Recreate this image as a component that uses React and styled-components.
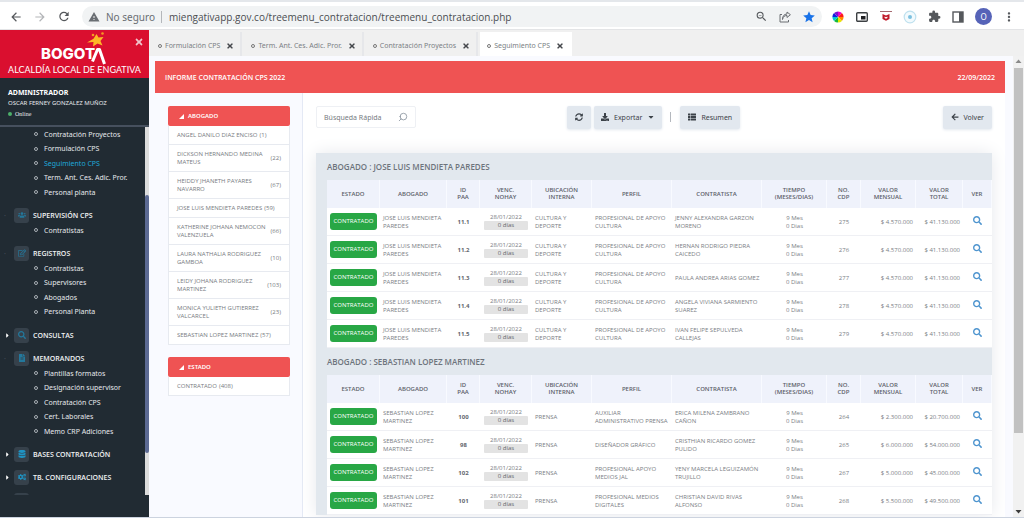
import React from "react";
import styled, { createGlobalStyle, css } from "styled-components";
import { Search } from "lucide-react";
import {
  FaUsers,
  FaRegEdit,
  FaSearch,
  FaFileAlt,
  FaDatabase,
  FaCogs,
  FaThList,
  FaDownload,
  FaCaretDown,
  FaCaretRight,
  FaArrowLeft,
  FaSyncAlt,
  FaTimes,
} from "react-icons/fa";
import {
  MdArrowBack,
  MdArrowForward,
  MdRefresh,
  MdWarning,
  MdStar,
  MdExtension,
  MdMoreVert,
  MdZoomOut,
} from "react-icons/md";

const GlobalStyle = createGlobalStyle`
  *, *::before { box-sizing: border-box; }
  body {
    margin: 0;
    background: #fff;
    font-family: "Noto Sans", "Open Sans", sans-serif;
    color: #6b6f76;
  }
  button, input { font-family: inherit; }
  ul { list-style: none; margin: 0; padding: 0; }
  a { color: inherit; text-decoration: none; }
`;

const Page = styled.div`
  display: flex;
  flex-direction: column;
  height: 100vh;
  overflow: hidden;
  border-bottom: 1px solid #ccd3df;
`;

/* Browser bar */

const BrowserBar = styled.header`
  display: flex;
  align-items: center;
  flex: none;
  height: 30px;
  padding: 2px 8px 0 9px;
  border-top: 2px solid #e4e7eb;
  border-bottom: 1px solid #e3e4e6;
  color: #55585c;
`;

const NavIcons = styled.div`
  display: flex;
  align-items: center;
  gap: 10px;
  width: 73px;
`;

const BarButton = styled.button`
  display: flex;
  align-items: center;
  justify-content: center;
  width: 14px;
  height: 14px;
  padding: 0;
  border: 0;
  background: none;
  color: ${(p) => p.$color || "#55585c"};
`;

const AddressBar = styled.div`
  display: flex;
  align-items: center;
  flex: 1;
  height: 21px;
  padding: 0 6px 0 6px;
  border-radius: 11px;
  background: #f1f3f4;
`;

const Security = styled.span`
  display: flex;
  align-items: center;
  gap: 6px;
  padding-right: 6px;
  margin-right: 7px;
  border-right: 1px solid #b4b7bb;
  font-size: 10px;
  line-height: 12px;
  color: #6a6e73;
`;

const UrlInput = styled.input`
  flex: 1;
  min-width: 0;
  padding: 0;
  border: 0;
  outline: 0;
  background: none;
  font-family: "Open Sans", sans-serif;
  font-size: 10px;
  color: #4b4e52;
`;

const AddressIcons = styled.div`
  display: flex;
  align-items: center;
  gap: 10px;
`;

const Extensions = styled.div`
  display: flex;
  align-items: center;
  gap: 10px;
  padding-left: 9px;
`;

const Avatar = styled.button`
  width: 17px;
  height: 17px;
  padding: 0;
  border: 0;
  border-radius: 50%;
  background: #5663b8;
  color: #fff;
  font-size: 8px;
  line-height: 17px;
`;

/* Sidebar */

const Body = styled.div`
  display: flex;
  flex: 1;
  min-height: 0;
`;

const Sidebar = styled.aside`
  display: flex;
  flex-direction: column;
  flex: none;
  width: 149px;
  background: #212b33;
  color: #e6e9ec;
`;

const Brand = styled.div`
  position: relative;
  flex: none;
  height: 48px;
  padding-top: 15px;
  background: #da0f2f;
  color: #fff;
  text-align: center;
`;

const LogoName = styled.div`
  padding-right: 13px;
  font-family: Inter, sans-serif;
  font-weight: 800;
  font-size: 15px;
  line-height: 18px;
`;

const LogoMark = styled.svg`
  position: absolute;
  left: 84px;
  top: 0;
`;

const BrandSub = styled.div`
  font-family: Lato, sans-serif;
  font-size: 9px;
  line-height: 14px;
`;

const CloseMenu = styled.button`
  position: absolute;
  right: 5px;
  top: 7px;
  display: flex;
  padding: 0;
  border: 0;
  background: none;
  color: #f0c4cb;
`;

const UserBox = styled.div`
  flex: none;
  height: 49px;
  padding: 9px 8px 0;
  border-bottom: 2px solid #46505e;
  font-size: 6px;
  line-height: 11px;
`;

const Role = styled.div`
  font-size: 7px;
  font-weight: 700;
  color: #fff;
`;

const Online = styled.div`
  display: flex;
  align-items: center;
  gap: 3px;
  font-family: "Liberation Serif", serif;
  line-height: 10px;

  &::before {
    content: "";
    width: 4px;
    height: 4px;
    border-radius: 50%;
    background: #4caf6a;
  }
`;

const MenuArea = styled.div`
  display: flex;
  flex: none;
  height: 368px;
`;

const Menu = styled.nav`
  flex: 1;
  overflow: hidden;
`;

const MenuTrack = styled.div`
  width: 4px;
  padding-top: 68px;
  background: #dcdcdc;
`;

const MenuThumb = styled.div`
  height: 258px;
  border-radius: 2px;
  background: #5c6a93;
`;

const MenuHead = styled.a`
  display: flex;
  align-items: center;
  height: 16px;
  margin-top: 7px;
  padding-left: 4px;
  font-family: "Open Sans", sans-serif;
  font-size: 7px;
  font-weight: 600;
  color: #f1f3f4;
`;

const Marker = styled.span`
  display: flex;
  width: 10px;
  color: ${(p) => (p.$open ? "#46505a" : "#ffffff")};
`;

const MenuIcon = styled.span`
  display: flex;
  align-items: center;
  justify-content: center;
  width: 15px;
  height: 15px;
  margin-right: 4px;
  border-radius: 3px;
  background: #36414b;
  color: ${(p) => (p.$bright ? "#1f94c4" : "#23789c")};
`;

const SubMenu = styled.ul`
  padding-bottom: 1px;
`;

const SubItem = styled.li`
  display: flex;
  align-items: center;
  gap: 6px;
  height: 14px;
  padding-left: 34px;
  font-size: 7px;
  white-space: nowrap;

  &:nth-child(even) {
    height: 15px;
  }
  &::before {
    content: "";
    width: 4px;
    height: 4px;
    border: 1px solid #aab0b6;
    border-radius: 50%;
  }
  a {
    color: ${(p) => (p.$active ? "#1fa7d8" : "#e6e9ec")};
  }
`;

/* Main area */

const Main = styled.div`
  display: flex;
  flex-direction: column;
  flex: 1;
  min-width: 0;
`;

const Tabs = styled.div`
  display: flex;
  flex: none;
  gap: 2px;
  height: 26px;
  padding: 2px 0 0 2px;
  background: #f0f0f0;
`;

const Tab = styled.div`
  display: flex;
  align-items: center;
  gap: 3px;
  padding: 3px 6px 0 7px;
  border-right: 2px solid #e6e7ea;
  font-size: 7px;
  color: #7b7f85;
  ${(p) =>
    p.$active &&
    css`
      background: #fff;
      border-right-color: #fff;
    `}

  &::before {
    content: "";
    width: 4px;
    height: 4px;
    border: 1px solid #777;
    border-radius: 50%;
  }
`;

const TabClose = styled.button`
  display: flex;
  margin-left: 3px;
  padding: 0;
  border: 0;
  background: none;
  color: #44474b;
`;

const Frame = styled.div`
  display: flex;
  flex: 1;
  min-height: 0;
`;

const Content = styled.main`
  display: flex;
  flex-direction: column;
  flex: 1;
  min-width: 0;
  padding: 5px 8px 0 6px;
  background: #f9faff;
  overflow: hidden;
`;

const TitleBar = styled.div`
  display: flex;
  align-items: center;
  justify-content: space-between;
  flex: none;
  height: 32px;
  padding: 0 10px;
  background: #ef5353;
  color: #fff;
  font-family: "Open Sans", sans-serif;
  font-size: 7px;
  font-weight: 600;
`;

const Columns = styled.div`
  display: flex;
  flex: 1;
  min-height: 0;
`;

const Filters = styled.aside`
  flex: none;
  width: 148px;
  padding: 13px 12px 0 13px;
  border-right: 1px solid #e4e9f5;
`;

const FilterPanel = styled.section`
  margin-bottom: 12px;
`;

const FilterHead = styled.h2`
  display: flex;
  align-items: center;
  gap: 4px;
  height: 20px;
  margin: 0;
  padding-left: 11px;
  border-radius: 2px;
  background: #ef5353;
  color: #fff;
  font-size: 6px;
  font-weight: 600;

  &::before {
    content: "";
    border-left: 5px solid transparent;
    border-bottom: 5px solid #fff;
  }
`;

const FilterList = styled.ul`
  border: 1px solid #e7eaf0;
  border-top: 0;
  background: #fff;
  font-family: "Open Sans", sans-serif;
`;

const FilterItem = styled.li`
  a {
    display: flex;
    align-items: center;
    gap: 2px;
    padding: 5px 8px;
    font-size: 6px;
    line-height: 8px;
    color: #777b81;
  }
  & + & {
    border-top: 1px solid #e7eaf0;
  }
`;

const FilterName = styled.span`
  ${(p) =>
    p.$wrap &&
    css`
      flex: 1;
      white-space: pre;
    `}
`;

const Report = styled.section`
  flex: 1;
  min-width: 0;
  padding: 12px 13px 0 13px;
  background: #fff;
`;

const Toolbar = styled.div`
  display: flex;
  align-items: center;
  height: 24px;
  margin-bottom: 24px;
`;

const SearchBox = styled.label`
  display: flex;
  align-items: center;
  width: 100px;
  height: 22px;
  padding: 0 7px;
  border: 1px solid #eef0f4;
  border-radius: 2px;
  color: #8a949f;
  margin-right: 151px;

  input {
    flex: 1;
    width: 60px;
    padding: 0;
    border: 0;
    outline: 0;
    font-size: 7px;
  }
  input::placeholder {
    color: #777b81;
    opacity: 1;
  }
  svg {
    transform: scaleX(-1);
  }
`;

const ToolButton = styled.button`
  display: flex;
  align-items: center;
  gap: 5px;
  height: 23px;
  padding: 0 ${(p) => p.$pad || 7}px;
  border: 0;
  border-radius: 2px;
  background: #e2e8ef;
  box-shadow: 0 1px 3px #e2e8ef;
  color: #3c4249;
  font-size: 7px;
  white-space: nowrap;
  margin-right: ${(p) => p.$after || 0}px;
`;

const Divider = styled.span`
  width: 1px;
  height: 10px;
  margin-right: 9px;
  background: #b4b8be;
`;

const Spacer = styled.span`
  flex: 1;
`;

const Groups = styled.div`
  background: #e2e8ee;
  padding-left: 11px;
  box-shadow: 0 0 16px #e6e8ec;
`;

const GroupTitle = styled.h3`
  display: flex;
  align-items: center;
  height: 27px;
  margin: 0;
  font-family: "Open Sans", sans-serif;
  font-size: 8px;
  font-weight: 600;
  line-height: 10px;
  color: #6d747c;
`;

const Table = styled.table`
  width: 100%;
  table-layout: fixed;
  border-collapse: separate;
  border-spacing: 0;
  background: #fff;
  font-family: "Open Sans", sans-serif;
  font-size: 6px;
  line-height: 8px;
`;

const Th = styled.th`
  height: 28px;
  padding: 0 2px;
  border-right: 1px solid #f8faff;
  background: #eff2fb;
  font-weight: 600;
  line-height: 7px;
  color: #5c6169;
  white-space: pre-line;
`;

const Td = styled.td`
  height: 28px;
  padding: 0 3px;
  border-bottom: 1px solid #eff0f4;
  text-align: ${(p) => p.$align || "left"};
  font-weight: ${(p) => (p.$strong ? 700 : 400)};
  color: ${(p) => (p.$strong ? "#63676d" : "#7a7e84")};
  white-space: pre;
`;

const Status = styled.span`
  display: block;
  height: 17px;
  border-radius: 3px;
  background: #28a745;
  color: #fff;
  line-height: 17px;
  text-align: center;
`;

const Days = styled.span`
  display: block;
  height: 9px;
  margin: 0 1px;
  border-radius: 1px;
  background: #e3e3e3;
  line-height: 9px;
  color: #5f6369;
`;

const ViewButton = styled.button`
  padding: 0;
  border: 0;
  background: none;
  color: #4f95cf;
  line-height: 0;
`;

const PageTrack = styled.div`
  display: flex;
  flex-direction: column;
  align-items: center;
  width: 11px;
  padding: 1px 0;
  background: #f1f1f1;
`;

const PageThumb = styled.div`
  flex: none;
  width: 9px;
  height: 365px;
  margin: 3px 0 auto;
  background: #c1c1c1;
`;

const MENU = [
  { items: ["Contratación Proyectos", "Formulación CPS", "Seguimiento CPS", "Term. Ant. Ces. Adic. Pror.", "Personal planta"] },
  { title: "SUPERVISIÓN CPS", icon: FaUsers, items: ["Contratistas"] },
  { title: "REGISTROS", icon: FaRegEdit, items: ["Contratistas", "Supervisores", "Abogados", "Personal Planta"] },
  { title: "CONSULTAS", icon: FaSearch },
  {
    title: "MEMORANDOS",
    icon: FaFileAlt,
    items: ["Plantillas formatos", "Designación supervisor", "Contratación CPS", "Cert. Laborales", "Memo CRP Adiciones"],
  },
  { title: "BASES CONTRATACIÓN", icon: FaDatabase, bright: true },
  { title: "TB. CONFIGURACIONES", icon: FaCogs, bright: true },
  { title: "", icon: null },
];

const TABS = ["Formulación CPS", "Term. Ant. Ces. Adic. Pror.", "Contratación Proyectos", "Seguimiento CPS"];

const LAWYERS = [
  ["ANGEL DANILO DIAZ ENCISO", 1],
  ["DICKSON HERNANDO MEDINA\nMATEUS", 22],
  ["HEIDDY JHANETH PAYARES\nNAVARRO", 67],
  ["JOSE LUIS MENDIETA PAREDES", 59],
  ["KATHERINE JOHANA NEMOCON\nVALENZUELA", 66],
  ["LAURA NATHALIA RODRIGUEZ\nGAMBOA", 10],
  ["LEIDY JOHANA RODRIGUEZ\nMARTINEZ", 103],
  ["MONICA YULIETH GUTIERREZ\nVALCARCEL", 23],
  ["SEBASTIAN LOPEZ MARTINEZ", 57],
];

const COLUMNS = [
  ["ESTADO", 53],
  ["ABOGADO", 67],
  ["ID\nPAA", 33],
  ["VENC.\nNOHAY", 52],
  ["UBICACIÓN\nINTERNA", 60],
  ["PERFIL", 80],
  ["CONTRATISTA", 90],
  ["TIEMPO\n(MESES/DIAS)", 65],
  ["NO.\nCDP", 34],
  ["VALOR\nMENSUAL", 55],
  ["VALOR\nTOTAL", 47],
  ["VER", 29],
];

const SUPPORT = "PROFESIONAL DE APOYO\nCULTURA";

const GROUPS = [
  {
    name: "JOSE LUIS MENDIETA PAREDES",
    lawyer: "JOSE LUIS MENDIETA\nPAREDES",
    place: "CULTURA Y\nDEPORTE",
    rows: [
      ["11.1", SUPPORT, "JENNY ALEXANDRA GARZON\nMORENO", 275, "4.570.000", "41.130.000"],
      ["11.2", SUPPORT, "HERNAN RODRIGO PIEDRA\nCAICEDO", 276, "4.570.000", "41.130.000"],
      ["11.3", SUPPORT, "PAULA ANDREA ARIAS GOMEZ", 277, "4.570.000", "41.130.000"],
      ["11.4", SUPPORT, "ANGELA VIVIANA SARMIENTO\nSUAREZ", 278, "4.570.000", "41.130.000"],
      ["11.5", SUPPORT, "IVAN FELIPE SEPULVEDA\nCALLEJAS", 279, "4.570.000", "41.130.000"],
    ],
  },
  {
    name: "SEBASTIAN LOPEZ MARTINEZ",
    lawyer: "SEBASTIAN LOPEZ\nMARTINEZ",
    place: "PRENSA",
    rows: [
      ["100", "AUXILIAR\nADMINISTRATIVO PRENSA", "ERICA MILENA ZAMBRANO\nCAÑON", 264, "2.300.000", "20.700.000"],
      ["98", "DISEÑADOR GRÁFICO", "CRISTHIAN RICARDO GOMEZ\nPULIDO", 265, "6.000.000", "54.000.000"],
      ["102", "PROFESIONAL APOYO\nMEDIOS JAL", "YENY MARCELA LEGUIZAMÓN\nTRUJILLO", 267, "5.000.000", "45.000.000"],
      ["101", "PROFESIONAL MEDIOS\nDIGITALES", "CHRISTIAN DAVID RIVAS\nALFONSO", 268, "5.500.000", "49.500.000"],
    ],
  },
];

function ShareIcon() {
  return (
    <svg width="12" height="12" viewBox="0 0 12 12" fill="none" stroke="#6a6e73">
      <path d="M3 3.500H1V11H9.500V9" />
      <path d="M3.500 8.500C4 5.500 5.500 4.500 8 4.500V6.500L11.400 3.700L8 1V3C5 3.200 3.500 5 3.500 8.500Z" strokeLinejoin="round" />
    </svg>
  );
}

function ColorWheel() {
  const colors = ["#e800d0", "#ff1a1a", "#ff8a00", "#e6e600", "#18b83a", "#00c8d8", "#1020e0", "#7a10d0"];
  return (
    <svg width="12" height="12" viewBox="-6 -6 12 12">
      {colors.map((c, i) => (
        <path key={c} d="M0 0L0 -5.600A5.600 5.600 0 0 1 3.960 -3.960Z" fill={c} transform={`rotate(${i * 45})`} />
      ))}
    </svg>
  );
}

function PipIcon() {
  return (
    <svg width="12" height="12" viewBox="0 0 12 12">
      <rect x="0.700" y="1.700" width="10.600" height="8.600" rx="1" fill="none" stroke="#3c4043" strokeWidth="1.400" />
      <rect x="5" y="5" width="4.500" height="3.500" fill="#202124" />
    </svg>
  );
}

function ShieldIcon() {
  return (
    <svg width="12" height="12" viewBox="0 0 12 12">
      <rect x="0" y="0" width="12" height="1" fill="#a56a70" />
      <path d="M2.500 3L6 4.600L9.500 3V8L6 9.800L2.500 8Z" fill="#c01828" />
      <path d="M4.600 5.500L6 6.300L7.400 5.500V7L6 7.800L4.600 7Z" fill="#fff" />
    </svg>
  );
}

function TargetIcon() {
  return (
    <svg width="14" height="14" viewBox="0 0 14 14">
      <circle cx="7" cy="7" r="5.800" fill="#f2fafd" stroke="#bfe1ef" strokeWidth="1.200" />
      <circle cx="7" cy="7" r="2" fill="#7cc0df" />
    </svg>
  );
}

function PanelIcon() {
  return (
    <svg width="12" height="12" viewBox="0 0 12 12">
      <rect x="1" y="1" width="10" height="10" fill="none" stroke="#55585c" strokeWidth="1.400" />
      <rect x="7" y="1" width="4" height="10" fill="#55585c" />
    </svg>
  );
}

function Chrome() {
  return (
    <BrowserBar>
      <NavIcons>
        <BarButton aria-label="Atrás"><MdArrowBack size={14} /></BarButton>
        <BarButton aria-label="Adelante" $color="#b3b5b8"><MdArrowForward size={14} /></BarButton>
        <BarButton aria-label="Recargar"><MdRefresh size={15} /></BarButton>
      </NavIcons>
      <AddressBar>
        <Security><MdWarning size={12} />No seguro</Security>
        <UrlInput aria-label="Dirección" defaultValue="miengativapp.gov.co/treemenu_contratacion/treemenu_contratacion.php" />
        <AddressIcons>
          <BarButton aria-label="Zoom"><MdZoomOut size={13} /></BarButton>
          <BarButton aria-label="Compartir"><ShareIcon /></BarButton>
          <BarButton aria-label="Favorito" $color="#1a73e8"><MdStar size={14} /></BarButton>
        </AddressIcons>
      </AddressBar>
      <Extensions>
        <BarButton aria-label="Colores"><ColorWheel /></BarButton>
        <BarButton aria-label="Imagen en imagen"><PipIcon /></BarButton>
        <BarButton aria-label="Protección"><ShieldIcon /></BarButton>
        <BarButton aria-label="Captura"><TargetIcon /></BarButton>
        <BarButton aria-label="Extensiones"><MdExtension size={13} /></BarButton>
        <BarButton aria-label="Panel lateral"><PanelIcon /></BarButton>
        <Avatar>O</Avatar>
        <BarButton aria-label="Menú"><MdMoreVert size={14} /></BarButton>
      </Extensions>
    </BrowserBar>
  );
}

function SideMenu() {
  return (
    <Sidebar>
      <Brand>
        <LogoName>BOGOT</LogoName>
        <LogoMark width="26" height="38" viewBox="0 0 26 38">
          <path d="M12.500 4L14.500 7.500L19.500 7L16.500 11L18.500 15.500L13.500 13.500L9 16.500L9.500 12L3 12.500L9.500 8.800Z" fill="#fdb827" />
          <circle cx="9" cy="5" r="1.300" fill="#f59a20" />
          <circle cx="18.500" cy="3.500" r="1.300" fill="#f59a20" />
          <path d="M8.500 31.500L13.500 19.500H15.500L20.500 34" fill="none" stroke="#fff" strokeWidth="3" strokeLinejoin="round" />
        </LogoMark>
        <BrandSub>ALCALDÍA LOCAL DE ENGATIVA</BrandSub>
        <CloseMenu aria-label="Cerrar menú"><FaTimes size={10} /></CloseMenu>
      </Brand>
      <UserBox>
        <Role>ADMINISTRADOR</Role>
        <div>OSCAR FERNEY GONZALEZ MUÑOZ</div>
        <Online>Online</Online>
      </UserBox>
      <MenuArea>
        <Menu>
          {MENU.map(({ title, icon: Icon, items, bright }, i) => (
            <div key={i}>
              {title !== undefined && (
                <MenuHead href="#">
                  <Marker $open={!!items}>{title && (items ? "·" : <FaCaretRight size={7} />)}</Marker>
                  <MenuIcon $bright={bright}>{Icon && <Icon size={8} />}</MenuIcon>
                  {title}
                </MenuHead>
              )}
              {items && (
                <SubMenu>
                  {items.map((t) => (
                    <SubItem key={t} $active={t === "Seguimiento CPS"}><a href="#">{t}</a></SubItem>
                  ))}
                </SubMenu>
              )}
            </div>
          ))}
        </Menu>
        <MenuTrack><MenuThumb /></MenuTrack>
      </MenuArea>
    </Sidebar>
  );
}

function Filter({ title, items }) {
  return (
    <FilterPanel>
      <FilterHead>{title}</FilterHead>
      <FilterList>
        {items.map(([name, count]) => (
          <FilterItem key={name}>
            <a href="#">
              <FilterName $wrap={name.includes("\n")}>{name}</FilterName>
              <span>({count})</span>
            </a>
          </FilterItem>
        ))}
      </FilterList>
    </FilterPanel>
  );
}

function Group({ group }) {
  return (
    <section>
      <GroupTitle>ABOGADO : {group.name}</GroupTitle>
      <Table>
        <colgroup>
          {COLUMNS.map(([name, width]) => <col key={name} width={width} />)}
        </colgroup>
        <thead>
          <tr>{COLUMNS.map(([name]) => <Th key={name}>{name}</Th>)}</tr>
        </thead>
        <tbody>
          {group.rows.map(([id, role, person, cdp, month, total]) => (
            <tr key={id}>
              <Td><Status>CONTRATADO</Status></Td>
              <Td>{group.lawyer}</Td>
              <Td $align="center" $strong>{id}</Td>
              <Td $align="center">28/01/2022<Days>0 días</Days></Td>
              <Td>{group.place}</Td>
              <Td>{role}</Td>
              <Td>{person}</Td>
              <Td $align="center">{"9 Mes\n0 Dias"}</Td>
              <Td $align="center">{cdp}</Td>
              <Td $align="right">$ {month}</Td>
              <Td $align="right">$ {total}</Td>
              <Td $align="center"><ViewButton aria-label="Ver"><FaSearch size={9} /></ViewButton></Td>
            </tr>
          ))}
        </tbody>
      </Table>
    </section>
  );
}

export default function App() {
  return (
    <Page>
      <GlobalStyle />
      <Chrome />
      <Body>
        <SideMenu />
        <Main>
          <Tabs>
            {TABS.map((t, i) => (
              <Tab key={t} $active={i === 3}>
                {t}
                <TabClose aria-label={`Cerrar ${t}`}><FaTimes size={8} /></TabClose>
              </Tab>
            ))}
          </Tabs>
          <Frame>
            <Content>
              <TitleBar><span>INFORME CONTRATACIÓN CPS 2022</span><span>22/09/2022</span></TitleBar>
              <Columns>
                <Filters>
                  <Filter title="ABOGADO" items={LAWYERS} />
                  <Filter title="ESTADO" items={[["CONTRATADO", 408]]} />
                </Filters>
                <Report>
                  <Toolbar>
                    <SearchBox>
                      <input aria-label="Búsqueda Rápida" placeholder="Búsqueda Rápida" />
                      <Search size={10} />
                    </SearchBox>
                    <ToolButton aria-label="Actualizar" $pad={8} $after={3}><FaSyncAlt size={8} /></ToolButton>
                    <ToolButton $after={8}><FaDownload size={8} />Exportar<FaCaretDown size={8} /></ToolButton>
                    <Divider />
                    <ToolButton $pad={8}><FaThList size={8} />Resumen</ToolButton>
                    <Spacer />
                    <ToolButton $pad={8}><FaArrowLeft size={8} />Volver</ToolButton>
                  </Toolbar>
                  <Groups>
                    {GROUPS.map((g) => <Group key={g.name} group={g} />)}
                  </Groups>
                </Report>
              </Columns>
            </Content>
            <PageTrack>
              <svg width="7" height="8" viewBox="0 0 7 8"><path d="M0.500 6L3.500 2.500L6.500 6Z" fill="#8a8a8a" /></svg>
              <PageThumb />
              <svg width="7" height="8" viewBox="0 0 7 8"><path d="M0.500 2L3.500 5.500L6.500 2Z" fill="#3c3c3c" /></svg>
            </PageTrack>
          </Frame>
        </Main>
      </Body>
    </Page>
  );
}
